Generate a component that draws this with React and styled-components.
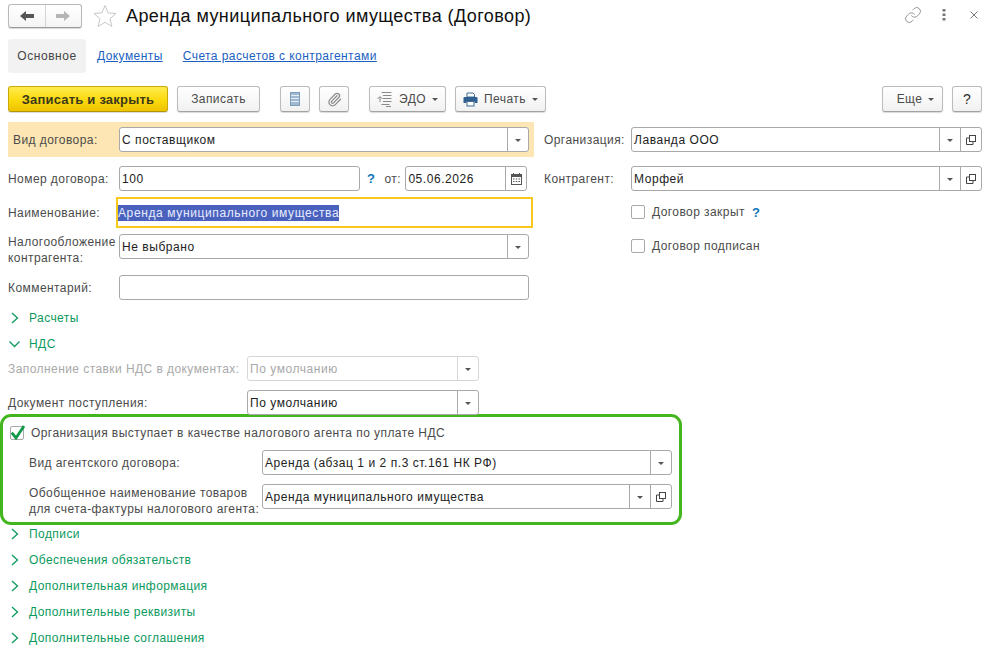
import React from "react"
import styled, { createGlobalStyle } from "styled-components"
import { Link, Paperclip } from "lucide-react"

const GlobalStyle = createGlobalStyle`
    html, body {
        margin: 0;
        padding: 0;
        background: #fff;
    }
    body {
        font-family: "Liberation Sans", Arial, sans-serif;
        font-size: 12px;
        letter-spacing: 0.43px;
        color: #4b4b4b;
    }
    * {
        box-sizing: border-box;
    }
`

const Page = styled.div`
    width: 991px;
    height: 652px;
    overflow: hidden;
`

const Header = styled.header`
    display: flex;
    align-items: center;
    height: 24px;
    margin: 4px 13px 0 8px;
`

const NavGroup = styled.div`
    display: flex;
    width: 74px;
    height: 24px;
    border: 1px solid #b9b9b9;
    border-bottom-color: #9a9a9a;
    border-radius: 3px;
    background: linear-gradient(#fff, #f4f4f4);
    box-shadow: 0 1px 1px rgba(0, 0, 0, 0.15);
`

const NavButton = styled.div`
    flex: 1;
    display: flex;
    align-items: center;
    justify-content: center;
    & + & {
        border-left: 1px solid #d4d4d4;
    }
`

const StarBox = styled.div`
    display: flex;
    margin-left: 11px;
`

const Title = styled.h1`
    margin: 0 0 0 9px;
    font-size: 18px;
    font-weight: 400;
    letter-spacing: 0.42px;
    color: #111;
    flex: 1;
`

const HeaderIcons = styled.div`
    display: flex;
    align-items: center;
    gap: 20px;
    margin-top: -2px;
    color: #777;
    svg:last-child {
        margin-left: 4px;
    }
`

const Tabs = styled.nav`
    display: flex;
    align-items: center;
    height: 34px;
    margin: 11px 0 0 8px;
`

const ActiveTab = styled.div`
    display: flex;
    align-items: center;
    justify-content: center;
    width: 78px;
    height: 34px;
    background: #f2f2f2;
    border-radius: 3px;
    color: #444;
    letter-spacing: 0.55px;
`

const TabLink = styled.a`
    margin-left: ${p => p.$gap}px;
    color: #1b5fc1;
    text-decoration: underline;
`

const Toolbar = styled.div`
    display: flex;
    align-items: center;
    height: 26px;
    margin: 13px 9px 0 8px;
`

const Button = styled.div`
    display: flex;
    align-items: center;
    justify-content: center;
    gap: 6px;
    width: ${p => p.$w}px;
    height: 26px;
    margin-left: ${p => p.$gap || 0}px;
    border: 1px solid #bcbcbc;
    border-bottom-color: #a2a2a2;
    border-radius: 3px;
    background: linear-gradient(#fff, #f1f1f1);
    box-shadow: 0 1px 1px rgba(0, 0, 0, 0.15);
    color: #4b4b4b;
`

const PrimaryButton = styled(Button)`
    border-color: #c9a90a;
    border-bottom-color: #b59608;
    background: linear-gradient(#ffec4f, #fbd90d 55%, #eec300);
    color: #3d3a1a;
    font-weight: 700;
    font-size: 13px;
    letter-spacing: 0.2px;
`

const MoreButton = styled(Button)`
    padding-left: 6px;
`

const HelpButton = styled(Button)`
    font-size: 14px;
    color: #2b2b2b;
`

const Caret = styled.span`
    width: 0;
    height: 0;
    border-left: 3.5px solid transparent;
    border-right: 3.5px solid transparent;
    border-top: 3px solid #555;
    margin-top: 1px;
`

const Spacer = styled.div`
    flex: 1;
`

const FormGrid = styled.div`
    display: grid;
    grid-template-columns: 534px 1fr;
    margin-top: 10px;
`

const LeftColumn = styled.div`
    padding-left: 8px;
`

const RightColumn = styled.div`
    padding: 5px 9px 0 10px;
`

const Row = styled.div`
    display: flex;
    align-items: center;
    height: ${p => p.$h || 25}px;
    margin-top: ${p => p.$top || 0}px;
`

const LeftRow = styled(Row)`
    padding-right: 5px;
`

const AccentRow = styled(LeftRow)`
    height: 35px;
    background: #fde6b3;
`

const Label = styled.label`
    flex: none;
    width: ${p => p.$w}px;
    padding-left: ${p => p.$pad || 0}px;
    margin-top: ${p => p.$drop || 0}px;
    line-height: 16px;
    color: ${p => (p.$muted ? "#a9a9a9" : "#4b4b4b")};
`

const Field = styled.div`
    display: flex;
    align-items: stretch;
    flex: ${p => (p.$w ? "none" : 1)};
    width: ${p => (p.$w ? `${p.$w}px` : "auto")};
    height: 25px;
    border: 1px solid ${p => (p.$muted ? "#d6d6d6" : "#a9a9a9")};
    border-radius: 3px;
    background: #fff;
    color: ${p => (p.$muted ? "#a9a9a9" : "#222")};
`

const FocusField = styled.div`
    flex: 1;
    display: flex;
    align-items: center;
    height: 31px;
    margin-left: -3px;
    margin-right: -4px;
    padding-left: 0;
    border: 2px solid #f8c81c;
`

const Selection = styled.span`
    padding: 1px 0 1px;
    background: #4a62bd;
    color: #e8ecff;
    letter-spacing: 0.62px;
`

const FieldValue = styled.div`
    flex: 1;
    display: flex;
    align-items: center;
    padding-left: 2px;
    letter-spacing: 0.55px;
`

const FieldButton = styled.div`
    flex: none;
    display: flex;
    align-items: center;
    justify-content: center;
    width: 21px;
    border-left: 1px solid ${p => (p.$muted ? "#d6d6d6" : "#a9a9a9")};
`

const Help = styled.span`
    color: #0f75b8;
    font-weight: 700;
    font-size: 13px;
`

const InlineHelp = styled(Help)`
    margin-left: 7px;
`

const DateLabel = styled.span`
    margin-left: 9px;
    width: 21px;
`

const Box = styled.span`
    position: relative;
    flex: none;
    width: 14px;
    height: 14px;
    border: 1px solid #a9a9a9;
    border-radius: 2px;
    background: #fff;
`

const CheckRow = styled(Row)`
    gap: 7px;
    height: 14px;
`

const RightCheck = styled(CheckRow)`
    margin-left: 87px;
`

const CheckMark = styled.svg`
    position: absolute;
    left: 0;
    top: -3px;
`

const Section = styled.div`
    display: flex;
    align-items: center;
    height: 20px;
    margin-top: ${p => p.$top ?? 6}px;
    padding-left: 8px;
    color: #0b9a5d;
    svg {
        flex: none;
        width: 14px;
        margin-right: 7px;
    }
`

const NdsFields = styled.div`
    padding-left: 8px;
`

const AgentBox = styled.div`
    width: 682px;
    height: 111px;
    margin-top: -1px;
    padding: 9px 7px 0 7px;
    border: 3px solid #43b61f;
    border-radius: 11px;
    background: #fff;
`

const AgentLabel = styled(Label)`
    width: 252px;
    padding-left: 19px;
`

const ArrowLeft = () => (
    <svg width="14" height="12" viewBox="0 0 14 12"><path d="M0 6 6 1v3h8v4H6v3z" fill="#555" /></svg>
)

const ArrowRight = () => (
    <svg width="14" height="12" viewBox="0 0 14 12"><path d="M14 6 8 1v3H0v4h8v3z" fill="#b5b5b5" /></svg>
)

const Star = () => (
    <svg width="24" height="24" viewBox="0 0 24 24"><path d="M12 1.5l3.1 7.4 7.9.6-6 5.2 1.9 7.800L12 18.300l-6.900 4.200L7 14.700 1 9.500l7.900-.6z" fill="#fff" stroke="#c8c8c8" /></svg>
)

const Dots = () => (
    <svg width="4" height="12" viewBox="0 0 4 12" fill="#777"><rect x="0.5" y="0" width="3" height="2.5" /><rect x="0.5" y="4.5" width="3" height="2.5" /><rect x="0.5" y="9" width="3" height="2.5" /></svg>
)

const Close = () => (
    <svg width="8" height="8" viewBox="0 0 8 8"><path d="M.5.5l7 7M7.5.5l-7 7" stroke="#777" /></svg>
)

const ReportIcon = () => (
    <svg width="10" height="14" viewBox="0 0 10 14">
        <rect x=".5" y=".5" width="9" height="13" fill="#9dbad2" stroke="#7f9db7" />
        <path d="M1 3.500h8M1 6.500h8M1 9.500h8" stroke="#e4edf4" />
    </svg>
)

const EdoIcon = () => (
    <svg width="16" height="15" viewBox="0 0 16 15" fill="none" stroke="#8b8b8b">
        <path d="M4.500 .5h10M6 3.500h8.500M6 6.500h8.500M6 9.500h8.500M4.500 12.500h8" />
        <path d="M.5 7 3 4.500 5.500 7M3 5v5M9 14.500h5" />
    </svg>
)

const PrinterIcon = () => (
    <svg width="15" height="15" viewBox="0 0 15 15">
        <path d="M4 1h6l1.500 1.500V5H4z" fill="#fff" stroke="#3f6a92" />
        <path d="M1.500 5h12a1 1 0 0 1 1 1v5h-3V9h-8v2h-3V6a1 1 0 0 1 1-1z" fill="#2f5f8f" />
        <rect x="4" y="9.500" width="7" height="4.500" fill="#fff" stroke="#3f6a92" />
    </svg>
)

const CalendarIcon = () => (
    <svg width="11" height="12" viewBox="0 0 11 12">
        <rect x=".5" y="1.500" width="10" height="10" fill="none" stroke="#555" />
        <rect x=".5" y="1.500" width="10" height="2.500" fill="#555" />
        <path d="M2.500 0v2M8.500 0v2" stroke="#555" />
        <path d="M2 6h1.500M4.800 6h1.500M7.500 6H9M2 8.500h1.500M4.800 8.500h1.500M7.500 8.500H9" stroke="#555" />
    </svg>
)

const OpenIcon = () => (
    <svg width="10" height="10" viewBox="0 0 10 10" fill="none" stroke="#444">
        <rect x="3.500" y=".5" width="6" height="6" />
        <path d="M3.500 3H.5v6.500H7V6.500" />
    </svg>
)

const ChevronRight = () => (
    <svg width="14" height="14" viewBox="0 0 14 14"><path d="M4 2l5.500 5L4 12" fill="none" stroke="#0b9a5d" strokeWidth="1.300" /></svg>
)

const ChevronDown = () => (
    <svg width="14" height="14" viewBox="0 0 14 14"><path d="M1.500 4.500 6.500 9.500l5-5" fill="none" stroke="#0b9a5d" strokeWidth="1.300" /></svg>
)

const SelectField = ({ value, w, muted, open }) => (
    <Field $w={w} $muted={muted}>
        <FieldValue>{value}</FieldValue>
        <FieldButton $muted={muted}><Caret /></FieldButton>
        {open && <FieldButton><OpenIcon /></FieldButton>}
    </Field>
)

const App = () => (
    <Page>
        <GlobalStyle />
        <Header>
            <NavGroup>
                <NavButton><ArrowLeft /></NavButton>
                <NavButton><ArrowRight /></NavButton>
            </NavGroup>
            <StarBox><Star /></StarBox>
            <Title>Аренда муниципального имущества (Договор)</Title>
            <HeaderIcons>
                <Link size={18} strokeWidth={1} />
                <Dots />
                <Close />
            </HeaderIcons>
        </Header>
        <Tabs>
            <ActiveTab>Основное</ActiveTab>
            <TabLink $gap={11}>Документы</TabLink>
            <TabLink $gap={20}>Счета расчетов с контрагентами</TabLink>
        </Tabs>
        <Toolbar>
            <PrimaryButton $w={160}>Записать и закрыть</PrimaryButton>
            <Button $w={83} $gap={9}>Записать</Button>
            <Button $w={30} $gap={20}><ReportIcon /></Button>
            <Button $w={30} $gap={9}><Paperclip size={15} color="#8b8b8b" /></Button>
            <Button $w={77} $gap={20}><EdoIcon />ЭДО<Caret /></Button>
            <Button $w={91} $gap={9}><PrinterIcon />Печать<Caret /></Button>
            <Spacer />
            <MoreButton $w={61}>Еще<Caret /></MoreButton>
            <HelpButton $w={30} $gap={9}>?</HelpButton>
        </Toolbar>
        <FormGrid>
            <LeftColumn>
                <AccentRow>
                    <Label $w={111} $pad={5}>Вид договора:</Label>
                    <SelectField value="С поставщиком" />
                </AccentRow>
                <LeftRow $top={9}>
                    <Label $w={111}>Номер договора:</Label>
                    <Field $w={241}><FieldValue>100</FieldValue></Field>
                    <InlineHelp>?</InlineHelp>
                    <DateLabel>от:</DateLabel>
                    <Field $w={122}>
                        <FieldValue>05.06.2026</FieldValue>
                        <FieldButton><CalendarIcon /></FieldButton>
                    </Field>
                </LeftRow>
                <LeftRow $top={6} $h={31}>
                    <Label $w={111}>Наименование:</Label>
                    <FocusField>
                        <Selection>Аренда муниципального имущества</Selection>
                    </FocusField>
                </LeftRow>
                <LeftRow $top={6}>
                    <Label $w={111} $drop={6}>Налогообложение контрагента:</Label>
                    <SelectField value="Не выбрано" />
                </LeftRow>
                <LeftRow $top={16}>
                    <Label $w={111}>Комментарий:</Label>
                    <Field />
                </LeftRow>
            </LeftColumn>
            <RightColumn>
                <Row>
                    <Label $w={87}>Организация:</Label>
                    <SelectField value="Лаванда ООО" open />
                </Row>
                <Row $top={14}>
                    <Label $w={87}>Контрагент:</Label>
                    <SelectField value="Морфей" open />
                </Row>
                <RightCheck $top={14}>
                    <Box />Договор закрыт<Help>?</Help>
                </RightCheck>
                <RightCheck $top={20}>
                    <Box />Договор подписан
                </RightCheck>
            </RightColumn>
        </FormGrid>
        <Section $top={8}><ChevronRight />Расчеты</Section>
        <Section><ChevronDown />НДС</Section>
        <NdsFields>
            <Row $top={2}>
                <Label $w={239} $muted>Заполнение ставки НДС в документах:</Label>
                <SelectField value="По умолчанию" w={232} muted />
            </Row>
            <Row $top={9}>
                <Label $w={239}>Документ поступления:</Label>
                <SelectField value="По умолчанию" w={232} />
            </Row>
        </NdsFields>
        <AgentBox>
            <CheckRow>
                <Box>
                    <CheckMark width="16" height="16" viewBox="0 0 16 16">
                        <path d="M.7 8.700 5 14 13 2" fill="none" stroke="#12994a" strokeWidth="2.800" />
                    </CheckMark>
                </Box>
                Организация выступает в качестве налогового агента по уплате НДС
            </CheckRow>
            <Row $top={10}>
                <AgentLabel>Вид агентского договора:</AgentLabel>
                <SelectField value="Аренда (абзац 1 и 2 п.3 ст.161 НК РФ)" />
            </Row>
            <Row $top={9}>
                <AgentLabel $drop={9}>Обобщенное наименование товаров для счета-фактуры налогового агента:</AgentLabel>
                <SelectField value="Аренда муниципального имущества" open />
            </Row>
        </AgentBox>
        <Section $top={-1}><ChevronRight />Подписи</Section>
        <Section><ChevronRight />Обеспечения обязательств</Section>
        <Section><ChevronRight />Дополнительная информация</Section>
        <Section><ChevronRight />Дополнительные реквизиты</Section>
        <Section><ChevronRight />Дополнительные соглашения</Section>
    </Page>
)

export default App
